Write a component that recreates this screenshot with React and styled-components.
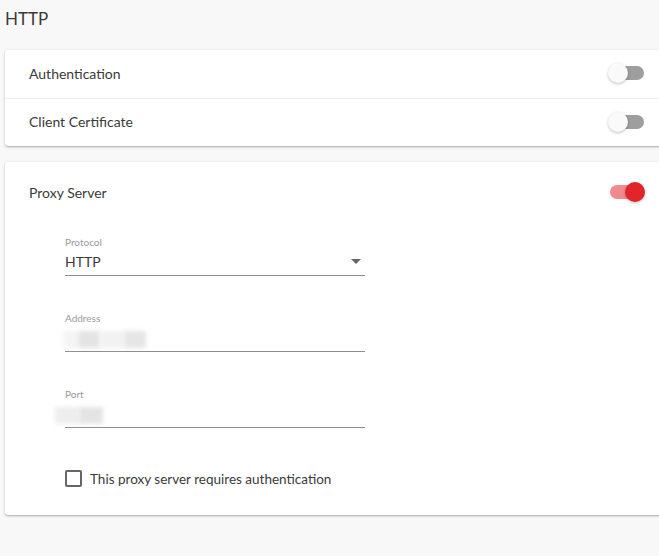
import React from 'react';
import styled, { createGlobalStyle } from 'styled-components';

const GlobalStyle = createGlobalStyle`
    html, body {
        margin: 0;
        padding: 0;
        background: #f8f8f8;
        overflow: hidden;
    }
    body {
        font-family: Lato, "Noto Sans", sans-serif;
        color: #3a3a3a;
    }
`

const Page = styled.div`
    width: 659px;
    height: 556px;
    padding-left: 5px;
    box-sizing: border-box;
`

const PageTitle = styled.h1`
    margin: 0;
    height: 50px;
    padding-top: 8px;
    box-sizing: border-box;
    font-size: 17px;
    font-weight: 400;
    line-height: 22px;
    color: #3a3a3a;
`

const Card = styled.div`
    width: 680px;
    background: #fff;
    border-radius: 3px;
    box-shadow: 0 1px 3px rgba(0, 0, 0, 0.22), 0 1px 1px rgba(0, 0, 0, 0.12);
    margin-bottom: 16px;
`

const Row = styled.div`
    display: flex;
    align-items: center;
    justify-content: space-between;
    height: ${p => p.height || 48}px;
    padding: 0 41px 2px 24px;
    box-sizing: border-box;
    font-size: 14px;
    & + & {
        border-top: 1px solid #eeeeee;
    }
`

const Track = styled.span`
    position: relative;
    display: inline-block;
    width: 34px;
    height: 14px;
    border-radius: 7px;
    background: ${p => (p.on ? '#f08a8d' : '#9e9e9e')};
`

const Knob = styled.span`
    position: absolute;
    top: -3px;
    left: ${p => (p.on ? '15px' : '-2px')};
    width: 20px;
    height: 20px;
    border-radius: 50%;
    background: ${p => (p.on ? '#e3242b' : '#fafafa')};
    box-shadow: 0 1px 3px rgba(0, 0, 0, 0.25);
`

const Switch = ({ on }) => (
    <Track on={on ? 1 : 0}>
        <Knob on={on ? 1 : 0} />
    </Track>
)

const Fields = styled.div`
    padding: 12px 0 28px 60px;
`

const Field = styled.div`
    width: 300px;
    margin-bottom: ${p => p.gap || 36}px;
`

const Label = styled.div`
    font-size: 10px;
    line-height: 12px;
    color: #9a9a9a;
`

const Input = styled.div`
    position: relative;
    display: flex;
    align-items: center;
    justify-content: space-between;
    height: 28px;
    border-bottom: 1px solid #8c8c8c;
    font-size: 14px;
    box-sizing: border-box;
`

const Blur = styled.span`
    display: inline-block;
    width: ${p => p.w}px;
    height: 17px;
    background: ${p => p.c || '#ececec'};
    filter: blur(2px);
`

const Blurs = styled.div`
    display: flex;
    align-items: center;
    margin-left: ${p => p.ml || 0}px;
    margin-top: 4px;
`

const Caret = styled.span`
    width: 0;
    height: 0;
    margin-right: 4px;
    border-left: 5px solid transparent;
    border-right: 5px solid transparent;
    border-top: 5px solid #666;
`

const CheckRow = styled.label`
    display: flex;
    align-items: center;
    gap: 8px;
    font-size: 13.5px;
    color: #3a3a3a;
`

const Box = styled.span`
    width: 13px;
    height: 13px;
    border: 2px solid #666;
    border-radius: 2px;
`

const App = () => (
    <>
        <GlobalStyle />
        <Page>
            <PageTitle>HTTP</PageTitle>
            <Card>
                <Row>
                    <span>Authentication</span>
                    <Switch />
                </Row>
                <Row>
                    <span>Client Certificate</span>
                    <Switch />
                </Row>
            </Card>
            <Card>
                <Row height={62}>
                    <span>Proxy Server</span>
                    <Switch on />
                </Row>
                <Fields>
                    <Field>
                        <Label>Protocol</Label>
                        <Input>
                            <span>HTTP</span>
                            <Caret />
                        </Input>
                    </Field>
                    <Field>
                        <Label>Address</Label>
                        <Input>
                            <Blurs ml={-2}>
                                <Blur w={15} c="#f4f4f4" />
                                <Blur w={22} c="#e4e4e4" />
                                <Blur w={24} c="#f2f2f2" />
                                <Blur w={22} c="#e6e6e6" />
                            </Blurs>
                        </Input>
                    </Field>
                    <Field gap={42}>
                        <Label>Port</Label>
                        <Input>
                            <Blurs ml={-10}>
                                <Blur w={24} c="#eeeeee" />
                                <Blur w={24} c="#e4e4e4" />
                            </Blurs>
                        </Input>
                    </Field>
                    <CheckRow>
                        <Box />
                        This proxy server requires authentication
                    </CheckRow>
                </Fields>
            </Card>
        </Page>
    </>
)

export default App;
